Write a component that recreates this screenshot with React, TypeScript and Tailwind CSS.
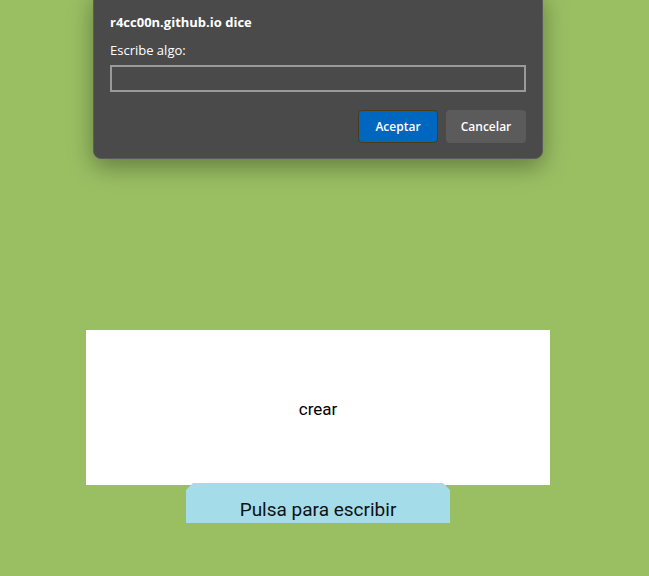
import React from 'react';

export default function App() {
  return (
    <div className="relative min-h-[576px] w-full overflow-hidden bg-[#9abf63] font-['Roboto',sans-serif]">
      <div className="flex flex-col pl-[86px] pt-[330px]">
        <div className="flex h-[155px] w-[464px] items-center justify-center bg-white pt-[5px] text-[17px] text-black">
          crear
        </div>
        <div className="-mt-[2px] ml-[100px] flex h-[40px] w-[264px] justify-center bg-[#a4dcea] pt-[14px] text-[19px] leading-[26px] text-[#111] [clip-path:polygon(7px_0,257px_0,264px_7px,264px_100%,0_100%,0_7px)]">
          Pulsa para escribir
        </div>
      </div>

      <div className="absolute left-[93px] top-[-10px] w-[450px] rounded-b-[8px] border border-[#5c5c5c] bg-[#4a4a4a] px-[16px] pb-[15px] pt-[22px] font-['Open_Sans',sans-serif] text-white shadow-[0_8px_24px_rgba(0,0,0,0.35)]">
        <div className="text-[13px] font-bold leading-[18px]">r4cc00n.github.io dice</div>
        <div className="mt-[10px] text-[13px] leading-[18px]">Escribe algo:</div>
        <div className="mt-[6px] h-[27px] w-[416px] border-2 border-[#9a9a9a] bg-[#4a4a4a]" />
        <div className="mt-[18px] flex justify-end gap-[8px]">
          <button className="h-[33px] w-[80px] rounded-[4px] border border-[#4a3c1a] bg-[#0067c0] text-[12px] font-semibold text-white">
            Aceptar
          </button>
          <button className="h-[33px] w-[80px] rounded-[4px] bg-[#5b5b5b] text-[12px] font-semibold text-white">
            Cancelar
          </button>
        </div>
      </div>
    </div>
  );
}
